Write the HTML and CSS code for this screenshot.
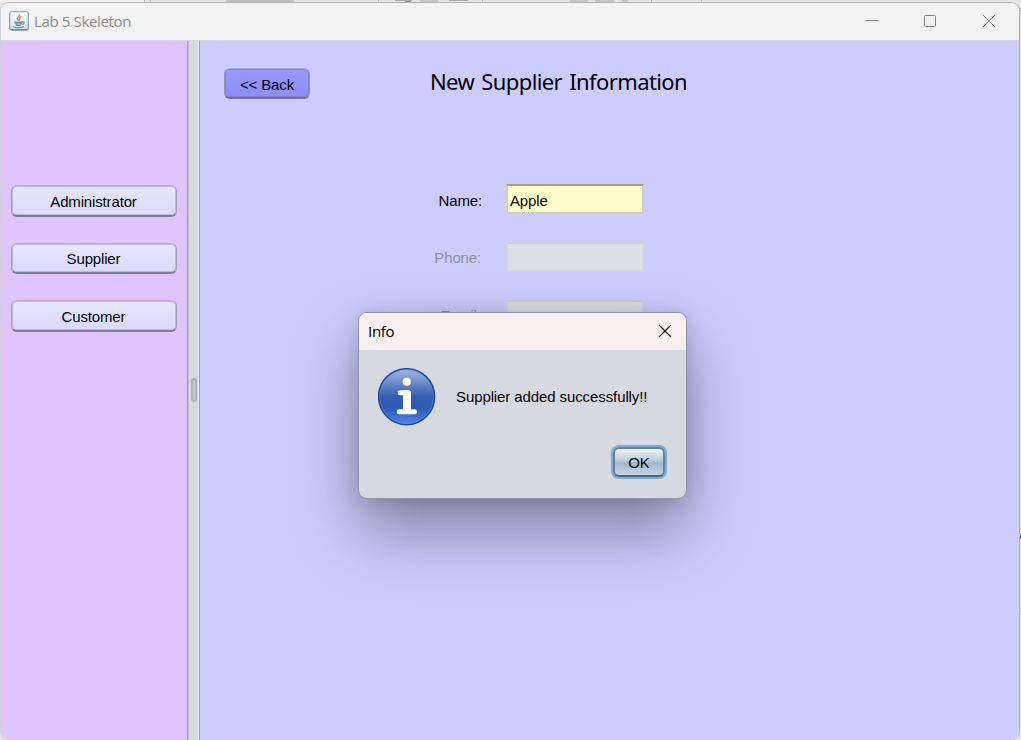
FILE: index.html
```html
<!DOCTYPE html>
<html lang="en">
<head>
<meta charset="utf-8">
<title>Lab 5 Skeleton</title>
<link rel="stylesheet" href="styles.css">
</head>
<body>
<svg class="backdrop" width="1021" height="740" aria-hidden="true">
  <rect width="1021" height="740" fill="#e4e4e4"/>
  <rect width="144" height="3" fill="#f1f1f1"/>
  <path d="M144.500 0v3M150.500 0v3M378.500 0v3M482.500 0v3M651.500 0v3M701.500 0v3" stroke="#b9b9b9"/>
  <rect x="226" width="68" height="3" fill="#bdbdbd"/>
  <path d="M395 .5h17M449 .5h19" stroke="#aaa"/>
  <path d="M405 1.500h6" stroke="#888"/>
  <path d="M420 1h18M570 1h18M595 1h19M622 1h6" stroke="#c6c6c6" stroke-width="2"/>
  <path d="M1019 8.500h2M1019 608.500h2" stroke="#aaa"/>
  <rect x="1019" y="535" width="2" height="4" fill="#3c78a8"/>
</svg>
<div class="window">
  <header class="titlebar">
    <svg class="java" width="20" height="20" viewBox="0 0 20 20">
      <defs><linearGradient id="tile" x1="0" y1="0" x2="0" y2="1"><stop offset="0" stop-color="#fff"/><stop offset="1" stop-color="#d9dfe4"/></linearGradient></defs>
      <rect x=".75" y=".75" width="18.500" height="18" rx="2" fill="url(#tile)" stroke="#8299ab" stroke-width="1.200"/>
      <path d="M1.500 19h17" stroke="#526f86"/>
      <path d="M10.600 3.200c1 2-3.600 3-2 5.300l1 1.300M12.300 5.500c-3 1.200-.8 2.600-2 4.200" fill="none" stroke="#ee8a45" stroke-width="1.400"/>
      <path d="M5.300 10.800q4 1 8 0M6 12.500q3.500 1 6.800 0M6.700 14.200q3 .8 5.400 0M13.200 11c3-.8 2.200 2-.4 2.500M4 15.800q5 1.800 11 0" fill="none" stroke="#6788a8" stroke-width="1.200"/>
    </svg>
    <span class="app-name">Lab 5 Skeleton</span>
    <svg class="controls" width="134" height="14" viewBox="0 0 134 14" fill="none" stroke="#858585">
      <path d="M1 6.500h12"/>
      <rect x="59.500" y="1.500" width="11" height="11" rx="1"/>
      <path d="M118 1l12 12M130 1L118 13"/>
    </svg>
  </header>
  <div class="content">
    <nav class="sidebar">
      <button class="btn">Administrator</button>
      <button class="btn">Supplier</button>
      <button class="btn">Customer</button>
    </nav>
    <div class="divider"><span class="grip"></span></div>
    <main class="panel">
      <div class="heading">
        <button class="btn back">&lt;&lt; Back</button>
        <h1 class="title">New Supplier Information</h1>
      </div>
      <form class="form">
        <label class="label">Name:</label><input class="field" value="Apple">
        <label class="label off">Phone:</label><input class="field off" disabled>
        <label class="label off">Email:</label><input class="field off" disabled>
      </form>
    </main>
  </div>
</div>
<div class="dialog">
  <div class="dialog-bar">
    <span class="dialog-title">Info</span>
    <svg width="14" height="14" viewBox="0 0 14 14" fill="none" stroke="#181818" stroke-width="1.200"><path d="M1 1l12 12M13 1L1 13"/></svg>
  </div>
  <div class="message">
    <svg width="58" height="58" viewBox="0 0 58 58">
      <defs><linearGradient id="ball" x1="0" y1="0" x2="0" y2="1"><stop offset="0" stop-color="#a3b8e1"/><stop offset=".3" stop-color="#6082c5"/><stop offset=".5" stop-color="#315eb4"/><stop offset=".7" stop-color="#2c59b2"/><stop offset="1" stop-color="#5186e5"/></linearGradient></defs>
      <circle cx="28.600" cy="28.700" r="28" fill="url(#ball)" stroke="#21479a" stroke-width="1.500"/>
      <circle cx="28.600" cy="28.700" r="26.800" fill="none" stroke="#6f98e2" stroke-width=".6" opacity=".7"/>
      <circle cx="28.800" cy="13.700" r="4" fill="#fff"/>
      <path d="M22.200 24.700h8M21.300 43.700h15.200" fill="none" stroke="#fff" stroke-width="5" stroke-linecap="round"/>
      <path d="M25 22.200h5.500q2.500 0 2.500 2.500v18.500h-8z" fill="#fff"/>
    </svg>
    <span class="text">Supplier added successfully!!</span>
  </div>
  <div class="actions"><button class="ok">OK</button></div>
</div>
</body>
</html>
```
FILE: styles.css
```css
* { box-sizing: border-box; }
body {
  margin: 0;
  width: 1021px;
  height: 740px;
  overflow: hidden;
  position: relative;
  font: 15px "Liberation Sans", Arial, sans-serif;
  letter-spacing: -0.15px;
  color: #000;
}
.backdrop { position: absolute; top: 0; left: 0; }
.window {
  position: relative;
  width: 1020px;
  height: 738px;
  margin-top: 2px;
  border: 1px solid #b4b4b4;
  border-left-color: #d0d1d8;
  border-bottom: 0;
  border-radius: 9px;
  overflow: hidden;
  display: flex;
  flex-direction: column;
}
.titlebar {
  height: 38px;
  flex: none;
  display: flex;
  align-items: center;
  padding: 0 20px 2px 8px;
  background: #f2f2f2;
  border-bottom: 1px solid #d5d6dd;
}
.java { margin-top: 1px; }
.app-name {
  margin-left: 5px;
  font: 15px "Open Sans", sans-serif;
  letter-spacing: -0.35px;
  color: #8b8b8b;
}
.controls { margin-left: auto; }
.content { flex: 1; display: flex; }
.sidebar {
  width: 186px;
  padding: 144px 10px 0 9.500px;
  background: #dfc4fd;
  display: flex;
  flex-direction: column;
  gap: 26px;
}
.btn {
  width: 166px;
  height: 31.500px;
  padding: 2px 0 0;
  font: inherit;
  letter-spacing: inherit;
  border: 1px solid #a19eb8;
  border-top-color: #b3adcb;
  border-bottom: 2px solid #807d96;
  border-radius: 6px;
  background: linear-gradient(#e6e6ff, #dadaff);
  box-shadow: inset 0 0 0 1px #bdbbd6;
}
.divider {
  width: 13px;
  display: flex;
  align-items: center;
  justify-content: center;
  background: #d6d9e0;
  border-left: 1px solid #9b9ca9;
  border-right: 1px solid #9fa1b4;
  box-shadow: inset -1px 0 #e5e8ec, inset 1px 0 #c0c2cc;
}
.grip {
  width: 6px;
  height: 24px;
  margin-bottom: 1px;
  border: 2px solid #adb0b8;
  border-radius: 3px;
  background: #c7cbd2;
}
.panel { flex: 1; background: #ccccff; padding: 27px 0 0 24px; }
.heading { display: flex; height: 32px; }
.btn.back {
  width: 86px;
  height: 31px;
  border-color: #9393c4;
  border-top-color: #a5a5d2;
  border-bottom-color: #7070a4;
  background: linear-gradient(#9999ff, #8c8cff);
  box-shadow: inset 0 0 0 1px #8585cb;
}
.title {
  margin: -1px 0 0 120px;
  font: 22px/29px "Noto Sans", sans-serif;
  letter-spacing: -0.6px;
  word-spacing: 2px;
  white-space: nowrap;
}
.form {
  margin-top: 84px;
  margin-left: 202px;
  display: grid;
  grid-template-columns: 56px 138px;
  grid-auto-rows: 31px;
  gap: 27px 24px;
}
.label { text-align: right; line-height: 33px; }
.label.off { color: #8e8f98; line-height: 31px; padding-right: 1px; }
.field {
  width: 138px;
  height: 30px;
  padding: 3px 3px 1px 2px;
  font: inherit;
  letter-spacing: inherit;
  border: 2px solid #d0d0bd;
  border-top-color: #a0a088;
  border-radius: 0;
  background: #ffffcc;
}
.field.off { background: #dce0e6; border-color: #d4d6dd; border-top-color: #ccced3; }
.dialog {
  position: absolute;
  left: 358px;
  top: 312px;
  width: 329px;
  height: 187px;
  border: 1px solid #9494a8;
  border-radius: 9px;
  background: #d6d9e0;
  box-shadow: 0 32px 64px rgba(0, 0, 0, .36), 0 2px 21px rgba(0, 0, 0, .14);
}
.dialog-bar {
  height: 37px;
  padding: 0 14px 2px 9px;
  display: flex;
  align-items: center;
  justify-content: space-between;
  background: #f7f0f0;
  border-radius: 8px 8px 0 0;
}
.dialog-title { font: 15px "Open Sans", sans-serif; letter-spacing: -0.3px; }
.message { display: flex; align-items: center; gap: 20px; padding: 18px 0 0 19px; }
.text { white-space: nowrap; letter-spacing: -0.1px; margin-top: -1px; }
.actions { display: flex; justify-content: flex-end; padding: 21px 21px 0 0; }
.ok {
  width: 52px;
  height: 30px;
  padding: 0;
  font: inherit;
  border: 2px solid #6082a0;
  border-bottom-color: #496782;
  border-radius: 6px;
  background: linear-gradient(#f0f4f8 0%, #b9cbda 45%, #a2b8ca 55%, #c3d7e7 100%);
  box-shadow: 0 0 0 2px #7eabd1;
}
```
